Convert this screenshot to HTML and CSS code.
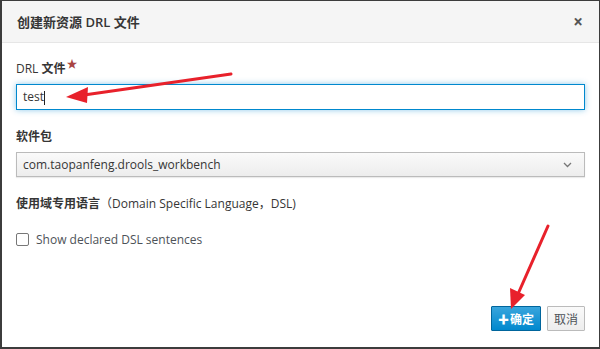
FILE: index.html
```html
<!DOCTYPE html>
<html lang="zh-CN">
<head>
  <meta charset="UTF-8" />
  <title>创建新资源 DRL 文件</title>
  <link rel="stylesheet" href="styles.css">
</head>
<body>
  <div class="modal">
    <!-- Header -->
    <div class="modal-header">
      <h4 class="modal-title">创建新资源 <b>DRL</b> 文件</h4>
      <span class="close">&times;</span>
    </div>

    <!-- Form -->
    <div class="modal-body">
      <div class="form-group">
        <label class="control-label">DRL <span class="zh">文件</span><span class="required">&#9733;</span></label>
        <div class="input focused">test<span class="caret-line"></span></div>
      </div>
      <div class="form-group">
        <label class="control-label"><span class="zh">软件包</span></label>
        <div class="select">
          <span>com.taopanfeng.drools_workbench</span>
          <svg class="chevron" width="9" height="6" viewBox="0 0 9 6"><path d="M1 1l3.5 3.5L8 1" fill="none" stroke="#777" stroke-width="1.3"/></svg>
        </div>
      </div>
      <div class="form-group">
        <label class="control-label"><span class="zh">使用域专用语言</span>（Domain Specific Language，DSL)</label>
      </div>
      <div class="checkbox">
        <span class="box"></span>
        <span>Show declared DSL sentences</span>
      </div>
    </div>

    <!-- Footer -->
    <div class="modal-footer">
      <button class="btn btn-primary"><span class="plus">&#10010;</span>确定</button>
      <button class="btn btn-default">取消</button>
    </div>

    <!-- Annotation arrows -->
    <svg class="arrows" width="600" height="349" viewBox="0 0 600 349">
      <line x1="231" y1="74" x2="84" y2="95" stroke="#e8212b" stroke-width="3" stroke-linecap="round"/>
      <polygon points="66,97 88,87 87,103" fill="#e8212b"/>
      <line x1="548" y1="226" x2="518" y2="294" stroke="#e8212b" stroke-width="3" stroke-linecap="round"/>
      <polygon points="511,309 510,288 525,295" fill="#e8212b"/>
    </svg>
  </div>
</body>
</html>
```

FILE: styles.css
```css
* {
  box-sizing: border-box;
}

html, body {
  margin: 0;
  padding: 0;
  background: #fff;
}

body {
  font-family: "Open Sans", "Noto Sans CJK SC", sans-serif;
  font-size: 12px;
  color: #363636;
}

.modal {
  position: relative;
  width: 600px;
  height: 349px;
  border: 1px solid #3c3c3c;
  border-left-width: 2px;
  border-bottom-width: 2px;
  display: flex;
  flex-direction: column;
  background: #fff;
}

.modal-header {
  height: 42px;
  background: #f5f5f5;
  border-bottom: 1px solid #e6e6e6;
  display: flex;
  align-items: center;
  justify-content: space-between;
  padding: 0 16px 0 15px;
}

.modal-title {
  margin: 0;
  font-size: 13px;
  font-weight: 600;
  color: #363636;
}

.modal-title b {
  font-weight: 600;
}

.close {
  font-size: 17px;
  font-weight: 700;
  color: #555;
  line-height: 1;
}

.modal-body {
  flex: 1;
  padding: 17px 14px 0 14px;
}

.form-group {
  margin-bottom: 18px;
}

.control-label {
  display: block;
  font-weight: 400;
  line-height: 18px;
  margin-bottom: 6px;
}

.control-label .zh {
  font-weight: 700;
}

.required {
  color: #a94442;
  font-size: 11px;
  vertical-align: top;
  position: relative;
  top: -5px;
  margin-left: 1px;
}

.input {
  height: 26px;
  border: 1px solid #0088ce;
  padding: 0 6px;
  line-height: 24px;
  font-size: 12px;
  color: #363636;
  box-shadow: 0 0 6px rgba(0, 136, 206, 0.45);
}

.caret-line {
  display: inline-block;
  width: 1px;
  height: 14px;
  background: #222;
  vertical-align: middle;
}

.select {
  height: 25px;
  border: 1px solid #bbb;
  background: linear-gradient(#fafafa, #ededed);
  padding: 0 12px 0 6px;
  display: flex;
  align-items: center;
  justify-content: space-between;
  color: #363636;
  box-shadow: 0 1px 1px rgba(3, 3, 3, 0.08);
}

.checkbox {
  display: flex;
  align-items: center;
  gap: 7px;
  color: #4d5258;
  margin-top: 12px;
}

.checkbox .box {
  width: 13px;
  height: 13px;
  border: 1px solid #777;
  border-radius: 2px;
  background: #fff;
}

.modal-footer {
  display: flex;
  justify-content: flex-end;
  gap: 6px;
  padding: 0 14px 16px 0;
}

.btn {
  font-family: "Open Sans", "Noto Sans CJK SC", sans-serif;
  font-size: 12px;
  height: 25px;
  padding: 0 6px;
  border-radius: 1px;
  cursor: pointer;
}

.btn-primary {
  background: linear-gradient(#39a5dc, #0088ce);
  border: 1px solid #00659c;
  color: #fff;
  font-weight: 600;
}

.plus {
  font-size: 11px;
  margin-right: 1px;
}

.btn-default {
  background: linear-gradient(#fafafa, #ededed);
  border: 1px solid #bbb;
  color: #4d5258;
}

.arrows {
  position: absolute;
  left: -2px;
  top: -1px;
  pointer-events: none;
}
```
